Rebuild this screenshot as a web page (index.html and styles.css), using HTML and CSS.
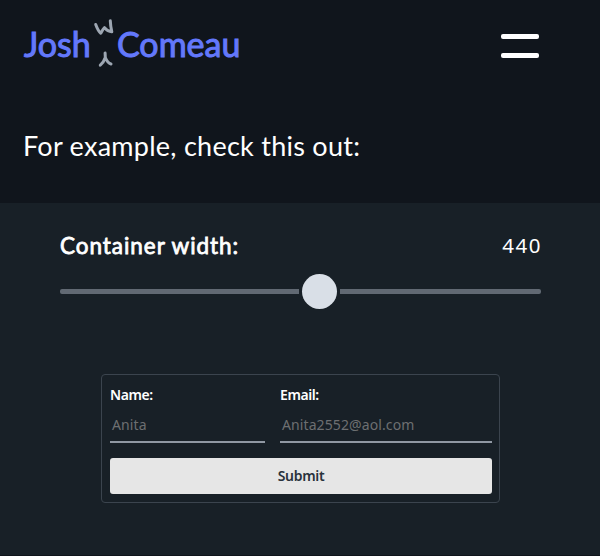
FILE: index.html
```
<!DOCTYPE html>
<html lang="en">
<head>
<meta charset="utf-8">
<title>Josh W Comeau</title>
<link rel="stylesheet" href="styles.css">
</head>
<body>
<header class="header">
  <a class="logo"><span class="first">Josh</span><svg class="initial" width="26" height="54" viewBox="0 0 26 54" fill="none" stroke="#9da6b2" stroke-width="3" stroke-linecap="round" stroke-linejoin="round"><path d="M4.7 8.5C6 12 7.5 15.5 9.8 17.2C11 15 12.2 12.7 13.5 11.6C15.2 13.7 17.4 15.8 20.8 15.7C20 12 19.4 8 19.3 4.7"/><path d="M14.1 37L14.3 41.5C13.3 44.5 11.8 47.2 9.3 49.2M14.3 41.5C15.7 45 17.5 47.3 20 48"/></svg><span class="last">Comeau</span></a>
  <div class="menu"><span class="bar"></span><span class="bar"></span></div>
</header>
<p class="intro"><span>For example, check this out:</span></p>
<main class="demo">
  <div class="control">
    <label class="title">Container width:</label>
    <output class="value">440</output>
  </div>
  <div class="slider"><span class="track left"></span><span class="thumb"></span><span class="track right"></span></div>
  <form class="form">
    <div class="fields">
      <div class="field"><label class="label">Name:</label><div class="input"><span class="ph-name">Anita</span></div></div>
      <div class="field"><label class="label email">Email:</label><div class="input"><span class="ph-email">Anita2552@aol.com</span></div></div>
    </div>
    <div class="submit"><span>Submit</span></div>
  </form>
</main>
</body>
</html>
```
FILE: styles.css
```
* { box-sizing: border-box; }
body { margin: 0; height: 556px; overflow: hidden; background: #10151c; color: #fff; font-family: Lato, "Noto Sans", sans-serif; }
.header { display: flex; justify-content: space-between; height: 104px; padding: 16px 61px 0 24px; }
.logo { display: flex; height: 54px; color: #6378fb; font-size: 34px; font-weight: 400; -webkit-text-stroke: 1px #6378fb; line-height: 56px; }
.first { width: 67px; }
.initial { display: block; flex: none; }
.menu { display: flex; flex-direction: column; gap: 14px; padding-top: 18px; }
.bar { width: 38px; height: 5px; border-radius: 2px; background: #fff; }
.intro { margin: 0; height: 99px; padding: 22px 23px 0; font-size: 27px; line-height: 40px; letter-spacing: 0.26px; }
.demo { height: 352px; padding: 28px 59px 0 60px; background: #182027; }
.control { display: flex; justify-content: space-between; height: 36px; line-height: 30px; }
.title { font-size: 22.5px; font-weight: 400; -webkit-text-stroke: 0.8px #fff; letter-spacing: 0.95px; }
.value { margin-right: -1px; font-family: "Noto Sans", sans-serif; font-size: 20.5px; line-height: 29px; letter-spacing: 1.5px; }
.slider { display: flex; align-items: center; justify-content: space-between; height: 49px; }
.track { height: 5px; background: #616973; }
.left { width: 239px; border-radius: 2px 0 0 2px; }
.right { width: 201px; border-radius: 0 2px 2px 0; }
.thumb { width: 35px; height: 35px; border-radius: 50%; background: #d9dfe7; }
.form { width: 399px; height: 129px; margin: 58px 0 0 41px; padding: 8px 7px 0 8px; border: 1px solid #3b444e; border-radius: 4px; font-family: "Noto Sans", sans-serif; font-size: 14px; }
.fields { display: grid; grid-template-columns: 155px 212px; column-gap: 15px; height: 75px; }
.label { display: block; height: 24px; line-height: 24px; font-weight: 600; letter-spacing: -0.4px; }
.input { height: 36px; padding-left: 2px; border-bottom: 2px solid #9098a3; color: #6d6f71; line-height: 35px; letter-spacing: 0.1px; }
.submit { height: 36px; border-radius: 3px; background: #e6e6e6; color: #29323c; font-weight: 600; line-height: 35px; letter-spacing: -0.3px; text-align: center; }
```
